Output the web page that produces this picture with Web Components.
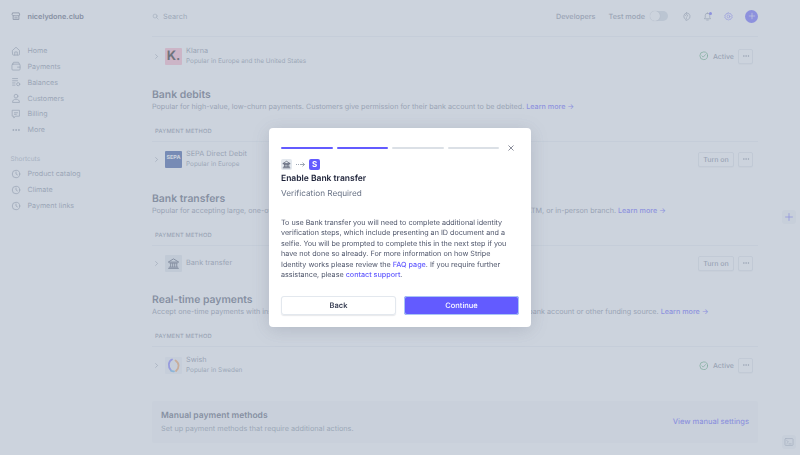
<!DOCTYPE html>
<html lang="en">
<head>
<meta charset="utf-8">
<title>Payment methods</title>
<style>
  html, body { margin: 0; height: 455px; overflow: hidden; background: #fff; }
  body { font-family: Inter, "Liberation Sans", sans-serif; color: #3c4257; text-rendering: geometricPrecision; }
</style>
</head>
<body>
<app-shell>
  <side-nav slot="side"></side-nav>
  <top-bar></top-bar>

  <pay-row name="Klarna" sub="Popular in Europe and the United States" logo="klarna" status="active" h="38"></pay-row>

  <pay-section gap="12" title="Bank debits" text="Popular for high-value, low-churn payments. Customers give permission for their bank account to be debited.">
    <pay-row name="SEPA Direct Debit" sub="Popular in Europe" logo="sepa" status="off"></pay-row>
  </pay-section>

  <pay-section gap="15" title="Bank transfers" text="Popular for accepting large, one-off payments directly from a customer's account, over the counter at a bank, ATM, or in-person branch.">
    <pay-row name="Bank transfer" logo="bank" status="off"></pay-row>
  </pay-section>

  <pay-section gap="12" title="Real-time payments" text="Accept one-time payments with instant payment confirmation, where customers can pay direct from their own bank account or other funding source.">
    <pay-row name="Swish" sub="Popular in Sweden" logo="swish" status="active" h="36"></pay-row>
  </pay-section>

  <manual-panel></manual-panel>
</app-shell>

<edge-tools></edge-tools>
<modal-dialog></modal-dialog>

<script>
const STROKE = 'fill="none" stroke="currentColor" stroke-width="1.2" stroke-linecap="round" stroke-linejoin="round"';

const ICONS = {
  store: `<path d="M3 3h10l1 3.5a2 2 0 0 1-3 .8 2.6 2.6 0 0 1-3 .2 2.6 2.6 0 0 1-3-.2 2 2 0 0 1-3-.8z"/><path d="M3.4 8.5V13.5h9.2V8.5M6 11h4"/>`,
  home: `<path d="M2.5 7 8 2l5.500 5v6.500a1 1 0 0 1-1 1h-9a1 1 0 0 1-1-1z"/><path d="M6 14.500V9.500h4v5"/>`,
  wallet: `<rect x="1.500" y="5" width="13" height="9.500" rx="1.500"/><path d="M2.500 5 4 2h8l1.500 3M10.500 9.800h4"/>`,
  balances: `<path d="M2.500 2.500h8M2.500 6h8M2.500 9.500h4M2.500 13h4"/><circle cx="11.500" cy="11.500" r="2.500"/>`,
  person: `<circle cx="8" cy="5" r="3"/><path d="M2.500 14.500c0-3 1.800-4.500 5.500-4.500s5.500 1.500 5.500 4.500z"/>`,
  billing: `<path d="M2.500 2h11v9.500H7l-2.500 3v-3h-2z"/><path d="M5.500 6h5M5.500 8.500h3"/>`,
  clock: `<circle cx="8" cy="8" r="6"/><path d="M8 4.800V8l2.300 1.500"/>`,
  dots: `<circle cx="3.500" cy="8" r=".7" fill="currentColor"/><circle cx="8" cy="8" r=".7" fill="currentColor"/><circle cx="12.500" cy="8" r=".7" fill="currentColor"/>`,
  search: `<circle cx="7" cy="7" r="4.500"/><path d="m10.500 10.500 3.500 3.500"/>`,
  help: `<path d="M8 1.500a6.300 6.300 0 0 1 2.500 12.100L7 15v-1.600A6.300 6.300 0 0 1 8 1.500z"/><path d="M6.300 6.200A1.800 1.800 0 1 1 8.900 7.900c-.6.400-.9.700-.9 1.400M8 11.300v.1"/>`,
  bell: `<path d="M8 2a4 4 0 0 0-4 4v3.500L2.500 12h11L12 9.500V6a4 4 0 0 0-4-4zM6.500 14.300h3"/>`,
  gear: `<path d="M8 1.300l1.500 1.800 2.300-.3.800 2.200 2.100 1-.7 2 .7 2-2.100 1-.8 2.200-2.300-.3L8 14.700l-1.500-1.800-2.300.3-.8-2.200-2.100-1 .7-2-.7-2 2.100-1 .8-2.200 2.300.3z"/><circle cx="8" cy="8" r="2.500"/>`,
  plus: `<path d="M8 2.500v11M2.500 8h11"/>`,
  check: `<circle cx="8" cy="8" r="6.500"/><path d="m5 8.200 2.100 2.100L11 6"/>`,
  chevron: `<path d="m6 3.500 4.500 4.500L6 12.500"/>`,
  close: `<path d="m3.500 3.500 9 9M12.500 3.500l-9 9"/>`,
  bank: `<path d="M2 6 8 2.300 14 6zM3.500 7.500h9M4.500 8v4M7 8v4M9.500 8v4M12 8v4M2.800 12.500h10.400M2 14h12"/>`,
  terminal: `<rect x="1.500" y="2.500" width="13" height="11" rx="1.500"/><path d="m4.500 5.500 2.500 2.500-2.500 2.500M8 11h3.500"/>`
};

// small stroke icon, name and size come from attributes
class XIcon extends HTMLElement {
  connectedCallback() {
    const size = this.getAttribute('size') || 10;
    const name = this.getAttribute('name');
    this.attachShadow({ mode: 'open' }).innerHTML = `
      <style>
        :host { display: inline-flex; flex: none; width: ${size}px; height: ${size}px; }
        svg { display: block; width: 100%; height: 100%; }
      </style>
      <svg viewBox="0 0 16 16" ${STROKE}>${ICONS[name]}</svg>`;
  }
}
customElements.define('x-icon', XIcon);

class AppShell extends HTMLElement {
  constructor() {
    super();
    this.attachShadow({ mode: 'open' }).innerHTML = `
      <style>
        :host { display: flex; height: 455px; overflow: hidden; }
        .side { flex: none; width: 152px; }
        .main { flex: none; width: 606px; }
      </style>
      <div class="side"><slot name="side"></slot></div>
      <div class="main"><slot></slot></div>`;
  }
}
customElements.define('app-shell', AppShell);

class SideNav extends HTMLElement {
  connectedCallback() {
    const item = (icon, label) => `<a><x-icon name="${icon}" size="10"></x-icon><span>${label}</span></a>`;
    this.attachShadow({ mode: 'open' }).innerHTML = `
      <style>
        :host { display: block; padding: 0 0 0 11px; color: #848d9d; font-size: 7.100px; font-weight: 400; }
        .brand { display: flex; align-items: center; gap: 6.500px; height: 32px; color: #4f566b; font-weight: 600; font-size: 7.300px; margin-bottom: 10.800px; }
        nav { display: flex; flex-direction: column; }
        a { display: flex; align-items: center; gap: 6.500px; height: 15.800px; }
        h4 { margin: 14.500px 0 0 -0.500px; height: 14px; line-height: 14px; font-size: 6.500px; font-weight: 400; color: #a3acb9; }
      </style>
      <div class="brand"><x-icon name="store" size="10"></x-icon><span>nicelydone.club</span></div>
      <nav>
        ${item('home', 'Home')}
        ${item('wallet', 'Payments')}
        ${item('balances', 'Balances')}
        ${item('person', 'Customers')}
        ${item('billing', 'Billing')}
        ${item('dots', 'More')}
      </nav>
      <h4>Shortcuts</h4>
      <nav>
        ${item('clock', 'Product catalog')}
        ${item('clock', 'Climate')}
        ${item('clock', 'Payment links')}
      </nav>`;
  }
}
customElements.define('side-nav', SideNav);

class TopBar extends HTMLElement {
  connectedCallback() {
    this.attachShadow({ mode: 'open' }).innerHTML = `
      <style>
        :host { display: flex; align-items: center; height: 32px; padding-bottom: 4px; border-bottom: 1px solid #eef1f4; font-size: 7.300px; font-weight: 500; color: #7f8899; }
        .search { display: flex; align-items: center; gap: 4px; flex: 1; color: #8792a2; font-weight: 400; }
        .mode { margin-left: 13px; }
        .toggle { width: 18px; height: 10px; margin: 0 14px 0 5px; border-radius: 5px; background: #d5dbe3; position: relative; }
        .toggle::after { content: ""; position: absolute; left: 0; top: 0; width: 10px; height: 10px; border-radius: 50%; background: #fff; box-shadow: 0 0 1px rgba(60,66,87,.4); }
        .icons { display: flex; align-items: center; gap: 12px; }
        .bell { position: relative; display: flex; }
        .bell::after { content: ""; position: absolute; right: 0; top: 0; width: 3px; height: 3px; border-radius: 50%; background: #635bff; }
        .gear { color: #7a73ff; }
        .add { width: 13px; height: 13px; border-radius: 50%; background: #635bff; color: #fff; display: flex; align-items: center; justify-content: center; }
      </style>
      <div class="search"><x-icon name="search" size="7"></x-icon><span>Search</span></div>
      <span>Developers</span>
      <span class="mode">Test mode</span>
      <span class="toggle"></span>
      <div class="icons">
        <x-icon name="help" size="9"></x-icon>
        <span class="bell"><x-icon name="bell" size="9"></x-icon></span>
        <x-icon class="gear" name="gear" size="9"></x-icon>
        <span class="add"><x-icon name="plus" size="8"></x-icon></span>
      </div>`;
  }
}
customElements.define('top-bar', TopBar);

class PaySection extends HTMLElement {
  connectedCallback() {
    const gap = this.getAttribute('gap') || 12;
    this.attachShadow({ mode: 'open' }).innerHTML = `
      <style>
        :host { display: block; margin-top: ${gap}px; }
        h2 { margin: 0; padding-top: .6px; font-size: 10.400px; line-height: 14px; font-weight: 600; color: #4f566b; }
        p { margin: 0; font-size: 7.200px; line-height: 10px; color: #7f8899; white-space: nowrap; }
        a { color: #635bff; font-weight: 500; }
        .label { margin-top: 15px; padding: 0 0 4.500px 3px; border-bottom: 1px solid #eef1f4; font-size: 5.700px; line-height: 10px; font-weight: 500; letter-spacing: .2px; color: #7f8899; }
      </style>
      <h2>${this.getAttribute('title')}</h2>
      <p>${this.getAttribute('text')} <a>Learn more →</a></p>
      <div class="label">PAYMENT METHOD</div>
      <slot></slot>`;
    this.removeAttribute('title');
  }
}
customElements.define('pay-section', PaySection);

const LOGOS = {
  klarna: `<div class="logo" style="background:#ffb3c7;color:#17120f;font-weight:700;font-size:13px">K.</div>`,
  sepa: `<div class="logo" style="background:#2b4c9b;color:#fff;font-weight:700;font-size:5.400px">SEPA</div>`,
  bank: `<div class="logo" style="background:#e3e8ee;color:#4f566b"><x-icon name="bank" size="13"></x-icon></div>`,
  swish: `<div class="logo" style="background:#f0f3f7"><svg width="13" height="15" viewBox="0 0 13 15" fill="none" stroke-width="1.800" stroke-linecap="round"><path d="M5 1.500C1.500 3 .5 8.500 4 12.500" stroke="#7a73ff"/><path d="M8.500 2.500C12.500 5 12.500 10 9 13" stroke="#f5a05a"/><path d="M4 12.500c1 .8 2 1 3 .8" stroke="#5fb3f0"/></svg></div>`
};

class PayRow extends HTMLElement {
  connectedCallback() {
    const sub = this.getAttribute('sub');
    const active = this.getAttribute('status') === 'active';
    const height = this.getAttribute('h') || 34;
    this.attachShadow({ mode: 'open' }).innerHTML = `
      <style>
        :host { display: flex; align-items: center; height: ${height}px; }
        .chev { color: #697386; margin: 1px 5px 0 1px; }
        .logo { flex: none; display: flex; align-items: center; justify-content: center; width: 17px; height: 17px; border-radius: 1px; line-height: 1; }
        .text { flex: 1; margin-left: 4px; display: flex; flex-direction: column; }
        .name { font-size: 7.300px; line-height: 10px; color: #7f8899; }
        .sub { font-size: 6.400px; line-height: 10px; color: #8792a2; }
        .status { display: flex; align-items: center; gap: 4.500px; font-size: 7px; font-weight: 500; color: #7f8899; }
        .status x-icon { color: #3d9c5c; }
        button { font: 500 7px Inter, sans-serif; text-rendering: inherit; color: #7f8899; background: #fff; border: 0; border-radius: 2.500px; box-shadow: inset 0 0 0 .8px #dde2e8, 0 1px 1px rgba(60,66,87,.06); height: 15px; padding: 0; }
        .turn { width: 36px; }
        .more { width: 15px; margin-left: 4px; display: flex; align-items: center; justify-content: center; }
        .actions { display: flex; align-items: center; margin-right: 5px; }
      </style>
      <x-icon class="chev" name="chevron" size="7"></x-icon>
      ${LOGOS[this.getAttribute('logo')]}
      <div class="text">
        <span class="name">${this.getAttribute('name')}</span>
        ${sub ? `<span class="sub">${sub}</span>` : ''}
      </div>
      <div class="actions">
        ${active
          ? `<div class="status"><x-icon name="check" size="9.500"></x-icon><span>Active</span></div>`
          : `<button class="turn">Turn on</button>`}
        <button class="more"><x-icon name="dots" size="8"></x-icon></button>
      </div>`;
  }
}
customElements.define('pay-row', PayRow);

class ManualPanel extends HTMLElement {
  connectedCallback() {
    this.attachShadow({ mode: 'open' }).innerHTML = `
      <style>
        :host { display: flex; align-items: center; justify-content: space-between; margin-top: 18px; height: 42px; padding: 0 9px; background: #f7f8f9; border-radius: 2px; }
        h3 { margin: 0 0 2.500px; font-size: 8.500px; line-height: 11px; font-weight: 600; color: #4f566b; }
        p { margin: 0; font-size: 7.300px; line-height: 10px; color: #8792a2; }
        a { margin-bottom: 1px; font-size: 7.500px; font-weight: 500; color: #635bff; }
      </style>
      <div><h3>Manual payment methods</h3><p>Set up payment methods that require additional actions.</p></div>
      <a>View manual settings</a>`;
  }
}
customElements.define('manual-panel', ManualPanel);

// floating buttons on the right edge of the window
class EdgeTools extends HTMLElement {
  connectedCallback() {
    this.attachShadow({ mode: 'open' }).innerHTML = `
      <style>
        .tool { position: fixed; left: 782px; width: 14px; height: 14px; border-radius: 3px; background: #f3f5f8; display: flex; align-items: center; justify-content: center; }
        .plus { top: 210px; color: #635bff; }
        .term { top: 435px; color: #a3acb9; }
      </style>
      <div class="tool plus"><x-icon name="plus" size="10"></x-icon></div>
      <div class="tool term"><x-icon name="terminal" size="10"></x-icon></div>`;
  }
}
customElements.define('edge-tools', EdgeTools);

class ModalDialog extends HTMLElement {
  connectedCallback() {
    this.attachShadow({ mode: 'open' }).innerHTML = `
      <style>
        :host { position: fixed; inset: 0; display: flex; align-items: center; justify-content: center; background: rgba(170,182,198,.6); backdrop-filter: blur(.7px); }
        .box { box-sizing: border-box; width: 262px; height: 199px; padding: 19px 12px 12px; background: #fff; border-radius: 4px; box-shadow: 0 3px 18px rgba(60,66,87,.18); color: #4f566b; }
        .steps { display: flex; align-items: center; gap: 4px; height: 2px; }
        .steps i { width: 51.500px; height: 2px; border-radius: 1px; background: #dbe0e6; }
        .steps i.on { background: #635bff; }
        .steps x-icon { margin-left: 4px; color: #3c4257; }
        .flow { display: flex; align-items: center; margin-top: 10px; height: 11px; }
        .flow .b { width: 11px; height: 11px; border-radius: 2px; background: #e3e8ee; color: #4f566b; display: flex; align-items: center; justify-content: center; }
        .flow svg { margin: 0 4px; flex: none; }
        .flow .s { width: 11px; height: 11px; border-radius: 2px; background: #635bff; color: #fff; font-size: 8px; font-weight: 700; line-height: 11px; text-align: center; }
        h2 { margin: 3px 0 0; font-size: 8.500px; line-height: 12px; font-weight: 600; color: #1a1f36; }
        h3 { margin: 2px 0 0; font-size: 8.200px; line-height: 12px; font-weight: 400; color: #697386; }
        .copy { margin: 18.800px 0 0; font-size: 7.200px; line-height: 10.500px; color: #4f566b; }
        .copy span { display: block; white-space: nowrap; }
        .copy a { color: #635bff; font-weight: 500; }
        .btns { display: flex; gap: 8px; margin-top: 15.700px; }
        button { flex: 1; height: 19px; border: 0; border-radius: 3px; font: 600 7.500px Inter, sans-serif; text-rendering: inherit; }
        .back { background: #fff; color: #3c4257; box-shadow: inset 0 0 0 1px #e3e8ee, 0 1px 1px rgba(60,66,87,.12); }
        .go { background: #635bff; color: #fff; font-weight: 500; box-shadow: inset 0 0 0 1px #a9c5f5; }
      </style>
      <div class="box" role="dialog">
        <div class="steps">
          <i class="on"></i><i class="on"></i><i></i><i></i>
          <x-icon name="close" size="8"></x-icon>
        </div>
        <div class="flow">
          <span class="b"><x-icon name="bank" size="9"></x-icon></span>
          <svg width="9" height="5" viewBox="0 0 9 5" fill="none" stroke="#8792a2" stroke-width=".8"><path d="M0 2.500h1M2 2.500h1M4 2.500h4.500M6.500 .6l2 1.900-2 1.900"/></svg>
          <span class="s">S</span>
        </div>
        <h2>Enable Bank transfer</h2>
        <h3>Verification Required</h3>
        <div class="copy">
          <span>To use Bank transfer you will need to complete additional identity</span>
          <span>verification steps, which include presenting an ID document and a</span>
          <span>selfie. You will be prompted to complete this in the next step if you</span>
          <span>have not done so already. For more information on how Stripe</span>
          <span>Identity works please review the <a>FAQ page</a>. If you require further</span>
          <span>assistance, please <a>contact support</a>.</span>
        </div>
        <div class="btns">
          <button class="back">Back</button>
          <button class="go">Continue</button>
        </div>
      </div>`;
  }
}
customElements.define('modal-dialog', ModalDialog);
</script>
</body>
</html>
